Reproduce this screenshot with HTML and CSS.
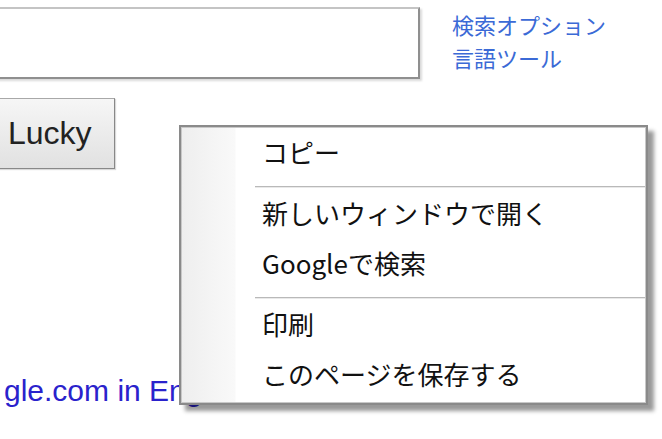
FILE: index.html
```html
<!DOCTYPE html>
<html lang="ja">
<head>
    <meta charset="UTF-8">
    <meta name="viewport" content="width=device-width, initial-scale=1.0">
    <title>Google</title>
    <link rel="stylesheet" href="styles.css">
</head>
<body>

    <div class="search-row">
        <div class="search-box"></div>
        <div class="search-links">
            <a href="#">検索オプション</a>
            <a href="#">言語ツール</a>
        </div>
    </div>

    <button class="lucky-btn">Lucky</button>

    <a class="lang-link" href="#">gle.com in English</a>

    <!-- right-click menu -->
    <div class="context-menu">
        <div class="menu-item">コピー</div>
        <div class="menu-sep"></div>
        <div class="menu-item">新しいウィンドウで開く</div>
        <div class="menu-item">Googleで検索</div>
        <div class="menu-sep"></div>
        <div class="menu-item">印刷</div>
        <div class="menu-item">このページを保存する</div>
    </div>

</body>
</html>
```

FILE: styles.css
```css
body {
    margin: 0;
    padding: 0;
    background: #fff;
    font-family: "Liberation Sans", Arial, "Noto Sans CJK JP", sans-serif;
    overflow: hidden;
    position: relative;
    height: 100vh;
}
.search-row {
    display: flex;
    align-items: flex-start;
    gap: 32px;
    padding-top: 7px;
}
.search-box {
    box-sizing: border-box;
    width: 432px;
    height: 72px;
    margin-left: -12px;
    background: #fff;
    border: 2px solid;
    border-color: #c4c4c4 #8f8f8f #8f8f8f #c4c4c4;
    box-shadow: 2px 2px 2px rgba(0, 0, 0, 0.15);
}
.search-links {
    display: flex;
    flex-direction: column;
    padding-top: 1px;
}
.search-links a {
    font-family: "Noto Sans CJK JP", sans-serif;
    font-size: 22px;
    line-height: 33px;
    color: #3b6ad6;
    text-decoration: none;
}
.lucky-btn {
    display: block;
    box-sizing: border-box;
    height: 71px;
    margin-top: 19px;
    margin-left: -20px;
    padding: 0 22px 0 27px;
    font-family: "Liberation Sans", Arial, sans-serif;
    font-size: 32px;
    color: #222;
    background: linear-gradient(#f6f6f6, #e1e1e1);
    border: 1px solid #a8a8a8;
    border-right-color: #888;
    border-bottom-color: #888;
    box-shadow: 1px 1px 1px rgba(0, 0, 0, 0.15);
    white-space: nowrap;
}
.lang-link {
    display: block;
    margin-top: 205px;
    margin-left: 4px;
    font-size: 30px;
    line-height: 33px;
    color: #2a22cc;
    text-decoration: none;
    white-space: nowrap;
}
.context-menu {
    position: absolute;
    left: 179px;
    top: 125px;
    box-sizing: border-box;
    width: 469px;
    padding-bottom: 4px;
    border: 2px solid #8a8a8a;
    background: linear-gradient(90deg, #eeeeee 0, #f9f9f9 54px, #fff 55px);
    box-shadow: inset 0 0 0 1px #c8c8c8, 6px 6px 4px rgba(0, 0, 0, 0.4);
    font-family: "Noto Sans CJK JP", sans-serif;
}
.menu-item {
    height: 50px;
    line-height: 50px;
    padding-left: 81px;
    font-size: 26px;
    color: #111;
    white-space: nowrap;
}
.menu-sep {
    height: 0;
    margin: 9px 1px 0 74px;
    border-top: 1px solid #b9b9b9;
    border-bottom: 1px solid #e9e9e9;
}
```
